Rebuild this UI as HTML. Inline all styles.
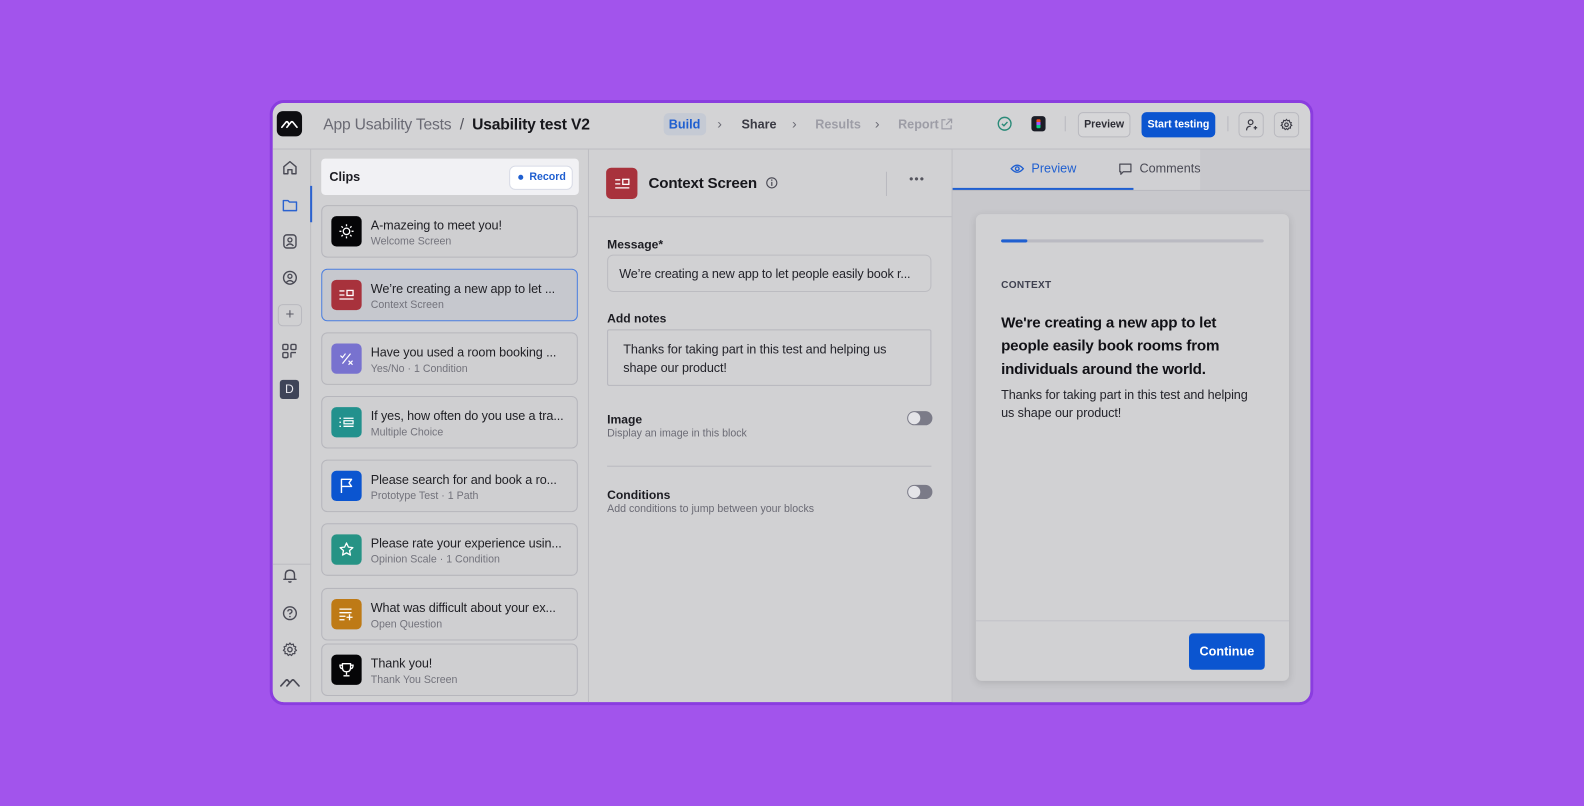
<!DOCTYPE html>
<html><head><meta charset="utf-8">
<style>
*{box-sizing:border-box;margin:0;padding:0}
html,body{width:1584px;height:806px;overflow:hidden;background:#a254ec;font-family:"Liberation Sans",sans-serif}
#s{position:absolute;left:0;top:0;width:1568px;height:798px;transform:scale(1.0102);transform-origin:0 0}
.a{position:absolute}
.frame{left:267px;top:99px;width:1033px;height:599px;border:3px solid #8a3ddf;border-radius:14px;background:#d1d1d3;overflow:hidden}
.t{position:absolute;white-space:nowrap}
.card{position:absolute;left:48px;width:254px;height:52px;border:1px solid #b6b6bc;border-radius:6px;background:#cfcfd1}
.ic{position:absolute;left:9px;top:10px;width:30px;height:30px;border-radius:5px;display:flex;align-items:center;justify-content:center}
.ct{position:absolute;left:48px;top:12px;font-size:12.5px;color:#1f1f24;letter-spacing:-.1px}
.cs{position:absolute;left:48px;top:29px;font-size:10.5px;color:#73737c}
.lbl{font-size:12px;font-weight:bold;color:#1c1c22}
.desc{font-size:10.5px;color:#6b6b75}
.tog{position:absolute;width:25px;height:14px;border-radius:7px;background:#7b7b88}
.tog:after{content:"";position:absolute;left:1px;top:1px;width:12px;height:12px;border-radius:50%;background:#e4e4e8}
svg{display:block}
</style></head><body><div id="s">
<div class="a frame">
 <div class="a" style="left:0;top:0;width:1030px;height:46px;background:#d3d3d5;border-bottom:1px solid #bdbdc2"></div>
 <div class="a" style="left:0;top:46px;width:38px;height:560px;background:#d0d0d2;border-right:1px solid #bdbdc2"></div>
 <div class="a" style="left:0;top:456px;width:38px;height:1px;background:#bdbdc2"></div>
 <div class="a" style="left:37px;top:82px;width:2px;height:36px;background:#2a62d0"></div>
 <div class="a" style="left:4px;top:8px;width:25px;height:25px;background:#0d0d10;border-radius:6px;display:flex;align-items:center;justify-content:center"><svg width="17" height="10" viewBox="0 0 17 10"><path d="M1 8 L5 3 Q6 2 7 3 L8 5 M6 8 L10 3 Q11 2 12 3 L16 8" stroke="#fff" stroke-width="1.6" fill="none" stroke-linecap="round"/></svg></div>
 <svg class="a" style="left:9px;top:56px" width="16" height="16" viewBox="0 0 16 16"><path d="M2 7 L8 2 L14 7 V14 H10 V10 H6 V14 H2 Z" fill="none" stroke="#4a4a55" stroke-width="1.4" stroke-linejoin="round"/></svg>
 <svg class="a" style="left:9px;top:93px" width="16" height="16" viewBox="0 0 16 16"><path d="M1.5 3.5 H6 L7.5 5 H14.5 V13.5 H1.5 Z" fill="none" stroke="#2a62d0" stroke-width="1.4" stroke-linejoin="round"/></svg>
 <svg class="a" style="left:9px;top:129px" width="16" height="16" viewBox="0 0 16 16"><rect x="2" y="1.5" width="12" height="13" rx="3" fill="none" stroke="#4a4a55" stroke-width="1.4"/><circle cx="8" cy="6.5" r="2" fill="none" stroke="#4a4a55" stroke-width="1.3"/><path d="M4.5 12.5 Q8 8.5 11.5 12.5" fill="none" stroke="#4a4a55" stroke-width="1.3"/></svg>
 <svg class="a" style="left:9px;top:165px" width="16" height="16" viewBox="0 0 16 16"><circle cx="8" cy="8" r="6.3" fill="none" stroke="#4a4a55" stroke-width="1.4"/><circle cx="8" cy="6.5" r="2" fill="none" stroke="#4a4a55" stroke-width="1.3"/><path d="M4.5 12.5 Q8 9 11.5 12.5" fill="none" stroke="#4a4a55" stroke-width="1.3"/></svg>
 <div class="a" style="left:5px;top:199px;width:24px;height:22px;border:1px solid #b9b9bf;border-radius:5px;color:#5a5a65;font-size:15px;text-align:center;line-height:19px">+</div>
 <svg class="a" style="left:9px;top:238px" width="15" height="15" viewBox="0 0 15 15"><rect x="1" y="1" width="5" height="5" rx="1.2" fill="none" stroke="#4a4a55" stroke-width="1.4"/><rect x="9" y="1" width="5" height="5" rx="1.2" fill="none" stroke="#4a4a55" stroke-width="1.4"/><rect x="1" y="9" width="5" height="5" rx="1.2" fill="none" stroke="#4a4a55" stroke-width="1.4"/><path d="M9 9 H14 M9 9 V14" stroke="#4a4a55" stroke-width="1.4"/></svg>
 <div class="a" style="left:7px;top:274px;width:19px;height:19px;background:#3e4458;border-radius:3px;color:#e8e8ee;font-size:12px;text-align:center;line-height:19px">D</div>
 <svg class="a" style="left:9px;top:460px" width="16" height="16" viewBox="0 0 16 16"><path d="M3.5 11.5 V7 Q3.5 2.5 8 2.5 Q12.5 2.5 12.5 7 V11.5 H14 H2 Z M6.5 13.5 Q8 15 9.5 13.5" fill="none" stroke="#4a4a55" stroke-width="1.4" stroke-linejoin="round"/></svg>
 <svg class="a" style="left:9px;top:497px" width="16" height="16" viewBox="0 0 16 16"><circle cx="8" cy="8" r="6.3" fill="none" stroke="#4a4a55" stroke-width="1.4"/><path d="M6 6.3 Q6 4.5 8 4.5 Q10 4.5 10 6.2 Q10 7.5 8 8.3 V9.3" fill="none" stroke="#4a4a55" stroke-width="1.3"/><circle cx="8" cy="11.4" r=".8" fill="#4a4a55"/></svg>
 <svg class="a" style="left:9px;top:533px" width="16" height="16" viewBox="0 0 16 16"><circle cx="8" cy="8" r="2.2" fill="none" stroke="#4a4a55" stroke-width="1.3"/><path d="M8 1.5 L9.3 3.2 L11.4 2.6 L11.7 4.7 L13.8 5.3 L13 7.3 L14.5 8.8 L12.7 9.9 L12.9 12 L10.8 12 L9.6 13.9 L8 12.6 L6.4 13.9 L5.2 12 L3.1 12 L3.3 9.9 L1.5 8.8 L3 7.3 L2.2 5.3 L4.3 4.7 L4.6 2.6 L6.7 3.2 Z" fill="none" stroke="#4a4a55" stroke-width="1.2" stroke-linejoin="round"/></svg>
 <svg class="a" style="left:7px;top:569px" width="20" height="10" viewBox="0 0 20 10"><path d="M1 8 L6 2.5 Q7 1.5 8 2.5 L9.5 4.5 M7 8 L12 2.5 Q13 1.5 14 2.5 L19 8" stroke="#4a4a55" stroke-width="1.6" fill="none" stroke-linecap="round"/></svg>

 <div class="t" style="left:50px;top:13px;font-size:15.5px;color:#6a6a74;letter-spacing:-.2px">App Usability Tests <span style="color:#55555e">&nbsp;/&nbsp;</span> <b style="color:#17171c">Usability test V2</b></div>
 <div class="a" style="left:387px;top:10px;width:42px;height:22px;background:#c5cad4;border-radius:5px"></div>
 <div class="t" style="left:392px;top:14px;font-size:12.5px;font-weight:bold;color:#1f5fd0">Build</div>
 <div class="t" style="left:440px;top:12px;font-size:14px;color:#6a6a74">›</div>
 <div class="t" style="left:464px;top:14px;font-size:12.5px;font-weight:bold;color:#3a3a44">Share</div>
 <div class="t" style="left:514px;top:12px;font-size:14px;color:#6a6a74">›</div>
 <div class="t" style="left:537px;top:14px;font-size:12.5px;font-weight:bold;color:#9d9da6">Results</div>
 <div class="t" style="left:596px;top:12px;font-size:14px;color:#6a6a74">›</div>
 <div class="t" style="left:619px;top:14px;font-size:12.5px;font-weight:bold;color:#9d9da6">Report</div>
 <svg class="a" style="left:661px;top:15px" width="12" height="12" viewBox="0 0 12 12"><path d="M5 1.5 H1.5 V10.5 H10.5 V7 M7 1 H11 V5 M11 1 L5.5 6.5" fill="none" stroke="#9d9da6" stroke-width="1.2"/></svg>
 <svg class="a" style="left:717px;top:13px" width="15" height="15" viewBox="0 0 15 15"><circle cx="7.5" cy="7.5" r="6.3" fill="none" stroke="#2a8a78" stroke-width="1.4"/><path d="M4.8 7.6 L6.8 9.5 L10.3 5.7" fill="none" stroke="#2a8a78" stroke-width="1.4"/></svg>
 <div class="a" style="left:751px;top:13px;width:14px;height:15px;background:#1b1d26;border-radius:3px"><div class="a" style="left:5px;top:3px;width:4px;height:9px;background:linear-gradient(#f24e1e 33%,#a259ff 33% 66%,#0acf83 66%);border-radius:1px"></div></div>
 <div class="a" style="left:784px;top:13px;width:1px;height:15px;background:#b9b9bf"></div>
 <div class="a" style="left:797px;top:9px;width:52px;height:25px;border:1px solid #b9b9bf;border-radius:5px;background:#d6d6d8;font-size:10.5px;font-weight:bold;color:#2d2d35;text-align:center;line-height:23px">Preview</div>
 <div class="a" style="left:860px;top:9px;width:73px;height:25px;border-radius:5px;background:#0b55d0;font-size:10.5px;font-weight:bold;color:#fff;text-align:center;line-height:25px">Start testing</div>
 <div class="a" style="left:945px;top:13px;width:1px;height:15px;background:#b9b9bf"></div>
 <div class="a" style="left:956px;top:9px;width:25px;height:25px;border:1px solid #b9b9bf;border-radius:5px"><svg style="margin:5px" width="13" height="13" viewBox="0 0 13 13"><circle cx="6" cy="4" r="2.3" fill="none" stroke="#3a3a44" stroke-width="1.2"/><path d="M2 12 Q2 8 6 8 M9 9.5 H12.5 M10.7 7.7 V11.3" fill="none" stroke="#3a3a44" stroke-width="1.2"/></svg></div>
 <div class="a" style="left:991px;top:9px;width:25px;height:25px;border:1px solid #b9b9bf;border-radius:5px"><svg style="margin:5px" width="13" height="13" viewBox="0 0 16 16"><circle cx="8" cy="8" r="2.2" fill="none" stroke="#3a3a44" stroke-width="1.4"/><path d="M8 1.5 L9.3 3.2 L11.4 2.6 L11.7 4.7 L13.8 5.3 L13 7.3 L14.5 8.8 L12.7 9.9 L12.9 12 L10.8 12 L9.6 13.9 L8 12.6 L6.4 13.9 L5.2 12 L3.1 12 L3.3 9.9 L1.5 8.8 L3 7.3 L2.2 5.3 L4.3 4.7 L4.6 2.6 L6.7 3.2 Z" fill="none" stroke="#3a3a44" stroke-width="1.3"/></svg></div>

 <div class="a" style="left:312px;top:46px;width:1px;height:560px;background:#bdbdc2"></div>
 <div class="a" style="left:48px;top:55px;width:255px;height:36px;background:#f1f1f4;border-radius:4px"></div>
 <div class="t" style="left:56px;top:66px;font-size:12.5px;font-weight:bold;color:#1c1c22">Clips</div>
 <div class="a" style="left:234px;top:62px;width:63px;height:24px;background:#fff;border:1px solid #d8dbe6;border-radius:6px"></div>
 <div class="a" style="left:243px;top:71px;width:5px;height:5px;border-radius:50%;background:#1f5fd0"></div>
 <div class="t" style="left:254px;top:67px;font-size:10.5px;font-weight:bold;color:#1f5fd0">Record</div>

 <div class="card" style="top:101px"><div class="ic" style="background:#050507"><svg width="16" height="16" viewBox="0 0 16 16"><circle cx="8" cy="8" r="3.2" fill="none" stroke="#fff" stroke-width="1.3"/><path d="M8 1V3M8 13V15M1 8H3M13 8H15M3 3L4.4 4.4M11.6 11.6L13 13M3 13L4.4 11.6M11.6 4.4L13 3" stroke="#fff" stroke-width="1.3"/></svg></div><div class="ct">A-mazeing to meet you!</div><div class="cs">Welcome Screen</div></div>
 <div class="card" style="top:164px;border:1.5px solid #4a7edf;background:#c6c8ce"><div class="ic" style="background:#a8323c"><svg width="16" height="12" viewBox="0 0 16 12"><path d="M1 2H6M1 6H6M1 10H15" stroke="#fff" stroke-width="1.3"/><rect x="8.5" y="1.5" width="6" height="5" fill="none" stroke="#fff" stroke-width="1.3"/></svg></div><div class="ct">We’re creating a new app to let ...</div><div class="cs">Context Screen</div></div>
 <div class="card" style="top:227px"><div class="ic" style="background:#7872cf"><svg width="16" height="16" viewBox="0 0 16 16"><path d="M2 5 L4 7 L7 3 M12 3 L4 13 M10 10 L14 14 M14 10 L10 14" stroke="#fff" stroke-width="1.2" fill="none"/></svg></div><div class="ct">Have you used a room booking ...</div><div class="cs">Yes/No · 1 Condition</div></div>
 <div class="card" style="top:290px"><div class="ic" style="background:#22918d"><svg width="16" height="12" viewBox="0 0 16 12"><path d="M1 2H2.5M1 6H2.5M1 10H2.5M5 2H15M5 10H15" stroke="#fff" stroke-width="1.3"/><rect x="5.5" y="4.5" width="9" height="3" fill="none" stroke="#fff" stroke-width="1.2"/></svg></div><div class="ct">If yes, how often do you use a tra...</div><div class="cs">Multiple Choice</div></div>
 <div class="card" style="top:353px"><div class="ic" style="background:#0b55d0"><svg width="14" height="16" viewBox="0 0 14 16"><path d="M2 15V1.5H12L9.5 5L12 8.5H2" stroke="#fff" stroke-width="1.4" fill="none" stroke-linejoin="round"/></svg></div><div class="ct">Please search for and book a ro...</div><div class="cs">Prototype Test · 1 Path</div></div>
 <div class="card" style="top:416px"><div class="ic" style="background:#269385"><svg width="16" height="16" viewBox="0 0 16 16"><path d="M8 1.5L9.9 5.6L14.3 6.1L11 9.1L11.9 13.5L8 11.3L4.1 13.5L5 9.1L1.7 6.1L6.1 5.6Z" stroke="#fff" stroke-width="1.3" fill="none" stroke-linejoin="round"/></svg></div><div class="ct">Please rate your experience usin...</div><div class="cs">Opinion Scale · 1 Condition</div></div>
 <div class="card" style="top:480px"><div class="ic" style="background:#be7a16"><svg width="16" height="14" viewBox="0 0 16 14"><path d="M1 2H13M1 5.5H13M1 9H7M1 12.5H6M11 7V13M8 10H14" stroke="#fff" stroke-width="1.3"/></svg></div><div class="ct">What was difficult about your ex...</div><div class="cs">Open Question</div></div>
 <div class="card" style="top:535px"><div class="ic" style="background:#050507"><svg width="16" height="16" viewBox="0 0 16 16"><path d="M4 2H12V6Q12 10 8 10Q4 10 4 6Z M4 3.5H1.5Q1.5 7 4.3 7 M12 3.5H14.5Q14.5 7 11.7 7 M8 10V13 M5 14H11" stroke="#fff" stroke-width="1.3" fill="none"/></svg></div><div class="ct">Thank you!</div><div class="cs">Thank You Screen</div></div>

 <div class="a" style="left:312px;top:112px;width:360px;height:1px;background:#bdbdc2"></div>
 <div class="a" style="left:672px;top:46px;width:1px;height:560px;background:#bdbdc2"></div>
 <div class="a" style="left:330px;top:64px;width:31px;height:31px;border-radius:5px;background:#a8323c;display:flex;align-items:center;justify-content:center"><svg width="16" height="12" viewBox="0 0 16 12"><path d="M1 2H6M1 6H6M1 10H15" stroke="#fff" stroke-width="1.3"/><rect x="8.5" y="1.5" width="6" height="5" fill="none" stroke="#fff" stroke-width="1.3"/></svg></div>
 <div class="t" style="left:372px;top:71px;font-size:15px;font-weight:bold;color:#17171c;letter-spacing:-.2px">Context Screen</div>
 <svg class="a" style="left:488px;top:73px" width="12" height="12" viewBox="0 0 12 12"><circle cx="6" cy="6" r="5" fill="none" stroke="#4a4a55" stroke-width="1.1"/><path d="M6 5V9" stroke="#4a4a55" stroke-width="1.2"/><circle cx="6" cy="3.3" r=".7" fill="#4a4a55"/></svg>
 <div class="a" style="left:607px;top:68px;width:1px;height:24px;background:#b9b9bf"></div>
 <div class="t" style="left:630px;top:68px;font-size:12px;color:#55555e;letter-spacing:1px">•••</div>
 <div class="t lbl" style="left:331px;top:133px">Message*</div>
 <div class="a" style="left:331px;top:150px;width:321px;height:37px;border:1px solid #bcbcc1;border-radius:6px"></div>
 <div class="t" style="left:343px;top:162px;font-size:12.5px;color:#23232a;letter-spacing:-.15px">We’re creating a new app to let people easily book r...</div>
 <div class="t lbl" style="left:331px;top:206px">Add notes</div>
 <div class="a" style="left:331px;top:224px;width:321px;height:56px;border:1px solid #b6b6bd;border-radius:2px"></div>
 <div class="t" style="left:347px;top:235px;font-size:12.5px;line-height:18px;color:#23232a;letter-spacing:-.1px">Thanks for taking part in this test and helping us<br>shape our product!</div>
 <div class="t lbl" style="left:331px;top:306px">Image</div>
 <div class="t desc" style="left:331px;top:321px">Display an image in this block</div>
 <div class="tog" style="left:628px;top:305px"></div>
 <div class="a" style="left:331px;top:359px;width:321px;height:1px;background:#b9b9bf"></div>
 <div class="t lbl" style="left:331px;top:381px">Conditions</div>
 <div class="t desc" style="left:331px;top:396px">Add conditions to jump between your blocks</div>
 <div class="tog" style="left:628px;top:378px"></div>

 <div class="a" style="left:673px;top:46px;width:357px;height:560px;background:#c8c8cc"></div>
 <div class="a" style="left:673px;top:46px;width:245px;height:40px;background:#d0d0d3"></div>
 <div class="a" style="left:673px;top:86px;width:357px;height:1px;background:#b9b9bf"></div>
 <div class="a" style="left:673px;top:84px;width:179px;height:2px;background:#1f5fd0"></div>
 <svg class="a" style="left:730px;top:60px" width="14" height="10" viewBox="0 0 14 10"><path d="M1 5Q7 -2 13 5Q7 12 1 5Z" fill="none" stroke="#1f5fd0" stroke-width="1.3"/><circle cx="7" cy="5" r="1.8" fill="none" stroke="#1f5fd0" stroke-width="1.3"/></svg>
 <div class="t" style="left:751px;top:58px;font-size:12.5px;color:#1f5fd0">Preview</div>
 <svg class="a" style="left:837px;top:59px" width="14" height="13" viewBox="0 0 14 13"><path d="M1.5 1.5H12.5V9H5L2.5 11.5V9H1.5Z" fill="none" stroke="#4a4a55" stroke-width="1.2" stroke-linejoin="round"/></svg>
 <div class="t" style="left:858px;top:58px;font-size:12.5px;color:#4a4a55">Comments</div>

 <div class="a" style="left:696px;top:110px;width:310px;height:462px;background:#d1d1d3;border-radius:6px;box-shadow:0 2px 8px rgba(0,0,0,.12)"></div>
 <div class="a" style="left:721px;top:135px;width:260px;height:3px;background:#babac2;border-radius:2px"></div>
 <div class="a" style="left:721px;top:135px;width:26px;height:3px;background:#1f5fd0;border-radius:2px"></div>
 <div class="t" style="left:721px;top:175px;font-size:10px;font-weight:bold;color:#3f4150;letter-spacing:.3px">CONTEXT</div>
 <div class="t" style="left:721px;top:206px;font-size:15px;font-weight:bold;line-height:23px;color:#111116;letter-spacing:-.2px">We're creating a new app to let<br>people easily book rooms from<br>individuals around the world.</div>
 <div class="t" style="left:721px;top:280px;font-size:12.5px;line-height:18px;color:#23232a;letter-spacing:-.1px">Thanks for taking part in this test and helping<br>us shape our product!</div>
 <div class="a" style="left:696px;top:512px;width:310px;height:1px;background:#c2c2c8"></div>
 <div class="a" style="left:907px;top:525px;width:75px;height:36px;border-radius:4px;background:#0b55d0;color:#fff;font-size:12.5px;font-weight:bold;text-align:center;line-height:36px">Continue</div>
</div>
</div></body></html>
